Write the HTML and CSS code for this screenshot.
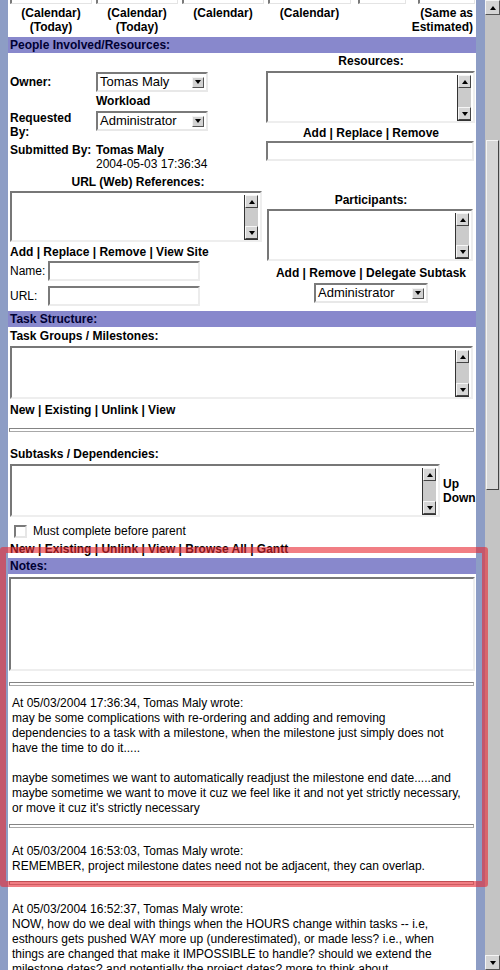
FILE: index.html
```html
<!DOCTYPE html>
<html>
<head>
<meta charset="utf-8">
<title>Task</title>
<link rel="stylesheet" href="styles.css">
</head>
<body>
<div class="window">
  <div class="page">
    <div class="content">
      <div class="toprow">
        <div class="tcell"><div class="stub"></div><div class="tlabel">(Calendar)<br>(Today)</div></div>
        <div class="tcell"><div class="stub"></div><div class="tlabel">(Calendar)<br>(Today)</div></div>
        <div class="tcell"><div class="stub"></div><div class="tlabel">(Calendar)</div></div>
        <div class="tcell"><div class="stub"></div><div class="tlabel">(Calendar)</div></div>
        <div class="tcell c5"><div class="stub"></div></div>
        <div class="tcell c6"><div class="stub"></div><div class="tlabel right">(Same as<br>Estimated)</div></div>
      </div>

      <div class="bar">People Involved/Resources:</div>

      <div class="people">
        <div class="pleft">
          <div class="pgrid">
            <div class="lbl mid">Owner:</div>
            <div class="select owner"><span class="sel-text">Tomas Maly</span><span class="sel-btn"><i class="tri-down"></i></span></div>

            <div class="r2"></div>
            <div class="lbl r2">Workload</div>

            <div class="lbl r3">Requested<br>By:</div>
            <div class="select owner r3"><span class="sel-text">Administrator</span><span class="sel-btn"><i class="tri-down"></i></span></div>

            <div class="lbl r4">Submitted By:</div>
            <div class="r4"><b>Tomas Maly</b><br>2004-05-03 17:36:34</div>
          </div>

          <div class="ctitle url-title">URL (Web) References:</div>
          <div class="listbox url-list">
            <div class="lb-area"></div>
            <div class="sb"><div class="sbtn"><i class="tri-up"></i></div><div class="strack"></div><div class="sbtn"><i class="tri-down"></i></div></div>
          </div>
          <div class="links url-links">Add | Replace | Remove | View Site</div>
          <div class="frow name-row"><span class="flabel">Name:</span><div class="tinput short name-in"></div></div>
          <div class="frow url-row"><span class="flabel">URL:</span><div class="tinput short"></div></div>
        </div>

        <div class="pright">
          <div class="ctitle res-title">Resources:</div>
          <div class="listbox res-list">
            <div class="lb-area"></div>
            <div class="sb"><div class="sbtn"><i class="tri-up"></i></div><div class="strack"></div><div class="sbtn"><i class="tri-down"></i></div></div>
          </div>
          <div class="ctitle res-links">Add | Replace | Remove</div>
          <div class="tinput res-in"></div>

          <div class="ctitle part-title">Participants:</div>
          <div class="listbox part-list">
            <div class="lb-area"></div>
            <div class="sb"><div class="sbtn"><i class="tri-up"></i></div><div class="strack"></div><div class="sbtn"><i class="tri-down"></i></div></div>
          </div>
          <div class="ctitle part-links">Add | Remove | Delegate Subtask</div>
          <div class="select part-sel"><span class="sel-text">Administrator</span><span class="sel-btn"><i class="tri-down"></i></span></div>
        </div>
      </div>

      <div class="bar task-bar">Task Structure:</div>

      <div class="stitle tg-title">Task Groups / Milestones:</div>
      <div class="listbox tg-list">
        <div class="lb-area"></div>
        <div class="sb"><div class="sbtn"><i class="tri-up"></i></div><div class="strack"></div><div class="sbtn"><i class="tri-down"></i></div></div>
      </div>
      <div class="links tg-links">New | Existing | Unlink | View</div>
      <div class="rule tg-rule"></div>

      <div class="stitle st-title">Subtasks / Dependencies:</div>
      <div class="st-row">
        <div class="listbox st-list">
          <div class="lb-area"></div>
          <div class="sb"><div class="sbtn"><i class="tri-up"></i></div><div class="strack"></div><div class="sbtn"><i class="tri-down"></i></div></div>
        </div>
        <div class="updown"><b>Up</b><br><b>Down</b></div>
      </div>
      <div class="cb-row"><span class="cbox"></span><span>Must complete before parent</span></div>
      <div class="links st-links">New | Existing | Unlink | View | Browse All | Gantt</div>

      <div class="bar notes-bar">Notes:</div>
      <div class="textarea"></div>
      <div class="rule r-a"></div>
      <div class="note n1">At 05/03/2004 17:36:34, Tomas Maly wrote:<br>may be some complications with re-ordering and adding and removing<br>dependencies to a task with a milestone, when the milestone just simply does not<br>have the time to do it.....<br><br>maybe sometimes we want to automatically readjust the milestone end date.....and<br>maybe sometime we want to move it cuz we feel like it and not yet strictly necessary,<br>or move it cuz it's strictly necessary</div>
      <div class="rule r-b"></div>
      <div class="note n2">At 05/03/2004 16:53:03, Tomas Maly wrote:<br>REMEMBER, project milestone dates need not be adjacent, they can overlap.</div>
      <div class="rule r-c"></div>
      <div class="note n3">At 05/03/2004 16:52:37, Tomas Maly wrote:<br>NOW, how do we deal with things when the HOURS change within tasks -- i.e,<br>esthours gets pushed WAY more up (underestimated), or made less? i.e., when<br>things are changed that make it IMPOSSIBLE to handle? should we extend the<br>milestone dates? and potentially the project dates? more to think about.</div>
    </div>
  </div>
  <div class="vscroll">
    <div class="vbtn"><i class="tri-up"></i></div>
    <div class="vtrack"><div class="vthumb"></div></div>
    <div class="vbtn"><i class="tri-down"></i></div>
  </div>
</div>
<div class="highlight"></div>
</body>
</html>
```

FILE: styles.css
```css
* { box-sizing: border-box; }
html, body { margin: 0; padding: 0; }
body {
  width: 500px;
  height: 970px;
  overflow: hidden;
  position: relative;
  background: #fff;
  color: #000;
  font-family: "Liberation Sans", Arial, sans-serif;
  font-size: 12px;
  line-height: 14px;
}
.window { display: flex; height: 970px; }
.page {
  width: 485px;
  flex: none;
  background: #8d9dc5;
  padding: 0 9px 0 8px;
}
.content { background: #fff; height: 100%; overflow: hidden; }

/* top row */
.toprow {
  display: grid;
  grid-template-columns: 86px 86px 86px 87px 58px 65px;
  height: 37px;
}
.stub {
  height: 4px;
  margin: 0 2px;
  border-left: 2px solid #7a7a7a;
  border-right: 1px solid #e4e4e4;
  border-bottom: 1px solid #e4e4e4;
}
.c5 .stub { margin: 0 5px; }
.c6 .stub { margin: 0 1px 0 7px; }
.tlabel { margin-top: 2px; text-align: center; font-weight: bold; }
.tlabel.right { text-align: right; padding-right: 3px; }

/* bars */
.bar {
  height: 16px;
  line-height: 16px;
  background: #8888cc;
  color: #000033;
  font-weight: bold;
  padding-left: 2px;
}
.task-bar { margin-top: 5px; }
.notes-bar { margin-top: 2px; }

/* people section */
.people { display: flex; }
.pleft { width: 258px; padding-left: 2px; }
.pright { width: 210px; }
.pgrid {
  display: grid;
  grid-template-columns: 86px 1fr;
  margin-top: 19px;
}
.lbl { font-weight: bold; }
.mid { align-self: center; }
.r2 { margin-top: 2px; }
.r3 { margin-top: 3px; }
.r4 { margin-top: 4px; }
.ctitle { text-align: center; font-weight: bold; }
.links { font-weight: bold; padding-left: 2px; }
.pleft .links { padding-left: 0; }

.url-title { margin-top: 4px; }
.url-list { margin-top: 2px; width: 252px; height: 51px; }
.url-links { margin-top: 3px; }
.frow { display: flex; align-items: center; }
.name-row { margin-top: 2px; }
.url-row { margin-top: 5px; }
.flabel { width: 38px; }
.tinput.short { width: 152px; }
.name-in { height: 19px; }

.res-title { margin-top: 1px; }
.res-list { margin-top: 3px; width: 209px; height: 52px; }
.res-links { margin-top: 3px; }
.res-in { margin-top: 1px; width: 208px; }
.part-title { margin-top: 32px; }
.part-list { margin-top: 2px; margin-left: 1px; width: 206px; height: 52px; }
.part-links { margin-top: 5px; }
.part-sel { margin: 3px auto 0; width: 114px; }

/* form widgets */
.select {
  display: flex;
  align-items: center;
  height: 20px;
  background: #fff;
  border-style: solid;
  border-width: 2px;
  border-color: #7a7a7a #e8e8e8 #e8e8e8 #7a7a7a;
  font-size: 13px;
  padding-left: 2px;
}
.select.owner { width: 112px; }
.sel-btn {
  margin-left: auto;
  margin-right: 2px;
  width: 12px;
  height: 11px;
  background: #d2d2d2;
  border-style: solid;
  border-width: 1px;
  border-color: #f4f4f4 #555 #555 #f4f4f4;
  display: flex;
  align-items: center;
  justify-content: center;
}
.tinput {
  height: 20px;
  background: #fff;
  border-style: solid;
  border-width: 2px;
  border-color: #7a7a7a #ececec #ececec #7a7a7a;
}
.tri-down, .tri-up {
  display: block;
  width: 0;
  height: 0;
  border-left: 3.5px solid transparent;
  border-right: 3.5px solid transparent;
}
.tri-down { border-top: 4px solid #000; }
.tri-up { border-bottom: 4px solid #000; }

.listbox {
  display: flex;
  background: #fff;
  border-style: solid;
  border-width: 2px;
  border-color: #777 #eeeeee #eeeeee #777;
}
.lb-area { flex: 1; }
.sb {
  width: 14px;
  margin: 2px 2px 0 0;
  display: flex;
  flex-direction: column;
  border-left: 1px solid #333;
  border-bottom: 1px solid #333;
  background: #cbcbcb;
}
.sbtn {
  height: 13px;
  background: #d6d6d6;
  border-style: solid;
  border-width: 1px;
  border-color: #f6f6f6 #444 #444 #f6f6f6;
  display: flex;
  align-items: center;
  justify-content: center;
}
.strack { flex: 1; }

/* task section */
.stitle { font-weight: bold; padding-left: 2px; }
.tg-title { margin-top: 2px; }
.tg-list { margin: 3px 0 0 2px; width: 463px; height: 53px; }
.tg-links { margin-top: 4px; }
.rule {
  margin-left: 1px;
  width: 465px;
  height: 4px;
  border-style: solid;
  border-width: 1px;
  border-color: #848484 #a8a8a8 #a8a8a8 #848484;
}
.tg-rule { margin-top: 11px; }
.st-title { margin-top: 15px; }
.st-row { display: flex; margin-top: 3px; padding-left: 2px; }
.st-list { width: 430px; height: 53px; }
.updown { margin: 13px 0 0 3px; }
.cb-row { display: flex; align-items: center; margin-top: 7px; padding-left: 6px; height: 14px; }
.cbox {
  width: 13px;
  height: 13px;
  margin-right: 6px;
  background: #fff;
  border-style: solid;
  border-width: 2px;
  border-color: #7a7a7a #e6e6e6 #e6e6e6 #7a7a7a;
}
.st-links { margin-top: 4px; }

/* notes */
.textarea {
  margin: 3px 0 0 1px;
  width: 466px;
  height: 94px;
  background: #fff;
  border-style: solid;
  border-width: 2px;
  border-color: #777 #eeeeee #eeeeee #777;
}
.r-a { margin-top: 11px; }
.note { padding-left: 4px; line-height: 15px; white-space: nowrap; }
.n1 { margin-top: 10px; }
.r-b { margin-top: 8px; }
.n2 { margin-top: 16px; }
.r-c { margin-top: 7px; }
.n3 { margin-top: 17px; }

/* browser scrollbar */
.vscroll {
  width: 15px;
  flex: none;
  display: flex;
  flex-direction: column;
  background: #c4c4c4;
}
.vbtn {
  height: 15px;
  background: #d4d4d4;
  border-style: solid;
  border-width: 1px;
  border-color: #f4f4f4 #555 #555 #f4f4f4;
  display: flex;
  align-items: center;
  justify-content: center;
}
.vtrack { flex: 1; padding-top: 125px; }
.vthumb {
  margin: 0 1px;
  height: 350px;
  background: #d6d6d6;
  border-style: solid;
  border-width: 1px;
  border-color: #f4f4f4 #444 #444 #f4f4f4;
}

/* annotation overlay */
.highlight {
  position: absolute;
  left: 0;
  top: 547px;
  width: 488px;
  height: 340px;
  border: 6px solid rgba(232, 40, 50, 0.6);
  border-radius: 3px;
  pointer-events: none;
}
```
